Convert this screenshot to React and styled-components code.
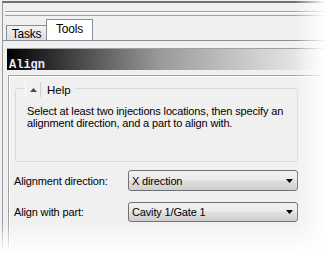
import React from "react";
import styled, { createGlobalStyle } from "styled-components";

const Global = createGlobalStyle`
  html, body { margin: 0; padding: 0; background: #ffffff; }
  body { font-family: "Liberation Sans", Arial, sans-serif; }
`;

const Screen = styled.div`
  position: relative;
  width: 326px;
  height: 253px;
  overflow: hidden;
  background: #f0f0f0;
  padding: 1px 0 0 2px;
  box-sizing: border-box;
`;

const Window = styled.div`
  height: 100%;
  border-top: 2px solid #6f6f6f;
  border-left: 1px solid #9a9a9a;
  display: flex;
  flex-direction: column;
`;

const Rebar = styled.div`
  margin: 8px 0 0 2px;
  height: 3px;
  border-top: 1px solid #a3a3a3;
  border-bottom: 1px solid #a3a3a3;
  box-shadow: inset 0 1px 0 #ffffff;
  flex: none;
`;

const TabStrip = styled.div`
  display: flex;
  align-items: flex-end;
  height: 24px;
  padding-left: 3px;
  border-bottom: 1px solid #898c95;
  flex: none;
`;

const Tab = styled.div`
  box-sizing: border-box;
  height: ${(p) => (p.$active ? "21px" : "15px")};
  width: ${(p) => (p.$active ? "47px" : "41px")};
  margin-left: ${(p) => (p.$active ? "-1px" : "0")};
  border: 1px solid #898c95;
  border-bottom: none;
  background: ${(p) =>
    p.$active ? "#ffffff" : "linear-gradient(#f3f3f3, #dcdcdc)"};
  font-size: 12px;
  letter-spacing: -0.2px;
  color: #000;
  display: flex;
  align-items: ${(p) => (p.$active ? "flex-start" : "center")};
  justify-content: center;
  padding-top: ${(p) => (p.$active ? "2px" : "1px")};
  line-height: 14px;
`;

const Pane = styled.div`
  margin: 7px 0 0 4px;
  flex: 1;
  display: flex;
  flex-direction: column;
`;

const Header = styled.div`
  border-top: 1px solid #a0a0a0;
  background: linear-gradient(to right, #000000 0%, #1a1a1a 8%, #9a9a9a 48%, #e4e4e4 90%, #efefef 100%);
  padding: 5px 0 0 2px;
  box-sizing: border-box;
  height: 22px;
  flex: none;
`;

const HeaderTitle = styled.span`
  font-family: "Liberation Mono", "Courier New", monospace;
  font-weight: bold;
  font-size: 12px;
  line-height: 14px;
  color: #e2eaff;
`;

const Content = styled.div`
  margin-top: 5px;
  margin-left: 1px;
  flex: 1;
  border-top: 1px solid #a0a0a0;
  border-left: 1px solid #a0a0a0;
  box-shadow: inset 1px 1px 0 #ffffff;
  display: flex;
  flex-direction: column;
`;

const GroupBox = styled.div`
  position: relative;
  margin: 12px 0 0 6px;
  width: 283px;
  height: 74px;
  box-sizing: border-box;
  border: 1px solid #d3dbe2;
  border-radius: 3px;
  padding: 16px 0 0 11px;
`;

const Legend = styled.div`
  position: absolute;
  left: 9px;
  top: -7px;
  display: flex;
  align-items: center;
  gap: 6px;
  padding-right: 4px;
  background: #f0f0f0;
`;

const ToggleButton = styled.div`
  width: 16px;
  height: 15px;
  box-sizing: border-box;
  border-left: 1px solid #ffffff;
  border-right: 1px solid #d0d0d0;
  display: flex;
  align-items: center;
  justify-content: center;
`;

const LegendText = styled.span`
  font-size: 11.5px;
  color: #000;
  line-height: 14px;
`;

const HelpText = styled.p`
  margin: 0;
  font-size: 11px;
  line-height: 12px;
  letter-spacing: -0.15px;
  color: #000;
  width: 270px;
`;

const Fields = styled.div`
  display: flex;
  flex-direction: column;
  gap: 11px;
  margin: 8px 0 0 5px;
`;

const FieldRow = styled.div`
  display: flex;
  align-items: center;
`;

const Label = styled.span`
  width: 114px;
  font-size: 11px;
  letter-spacing: -0.15px;
  color: #000;
`;

const Select = styled.div`
  width: 170px;
  height: ${(p) => p.$h || 20}px;
  box-sizing: border-box;
  border: 1px solid #707070;
  border-radius: 3px;
  background: linear-gradient(#f2f2f2 0%, #ebebeb 45%, #dddddd 55%, #cfcfcf 100%);
  display: flex;
  align-items: center;
  justify-content: space-between;
  padding: 0 4px 0 3px;
  font-size: 11px;
  letter-spacing: -0.15px;
  color: #000;
`;

const FadeRight = styled.div`
  position: absolute;
  top: 0;
  right: 0;
  width: 32px;
  height: 100%;
  background: linear-gradient(to right, rgba(255,255,255,0), #ffffff);
  pointer-events: none;
`;

const FadeBottom = styled.div`
  position: absolute;
  left: 0;
  bottom: 0;
  width: 100%;
  height: 32px;
  background: linear-gradient(to bottom, rgba(255,255,255,0), #ffffff);
  pointer-events: none;
`;

const UpArrow = () => (
  <svg width="7" height="4" viewBox="0 0 7 4">
    <path d="M3.5 0 L7 4 L0 4 Z" fill="#4a4a4a" />
  </svg>
);

const DownArrow = () => (
  <svg width="7" height="4" viewBox="0 0 7 4">
    <path d="M0 0 L7 0 L3.5 4 Z" fill="#000" />
  </svg>
);

export default function App() {
  return (
    <>
      <Global />
      <Screen>
        <Window>
          <Rebar />
          <TabStrip>
            <Tab>Tasks</Tab>
            <Tab $active>Tools</Tab>
          </TabStrip>
          <Pane>
            <Header>
              <HeaderTitle>Align</HeaderTitle>
            </Header>
            <Content>
              <GroupBox>
                <Legend>
                  <ToggleButton>
                    <UpArrow />
                  </ToggleButton>
                  <LegendText>Help</LegendText>
                </Legend>
                <HelpText>
                  Select at least two injections locations, then specify an
                  alignment direction, and a part to align with.
                </HelpText>
              </GroupBox>
              <Fields>
                <FieldRow>
                  <Label>Alignment direction:</Label>
                  <Select $h={21}>
                    <span>X direction</span>
                    <DownArrow />
                  </Select>
                </FieldRow>
                <FieldRow>
                  <Label>Align with part:</Label>
                  <Select>
                    <span>Cavity 1/Gate 1</span>
                    <DownArrow />
                  </Select>
                </FieldRow>
              </Fields>
            </Content>
          </Pane>
        </Window>
        <FadeRight />
        <FadeBottom />
      </Screen>
    </>
  );
}
